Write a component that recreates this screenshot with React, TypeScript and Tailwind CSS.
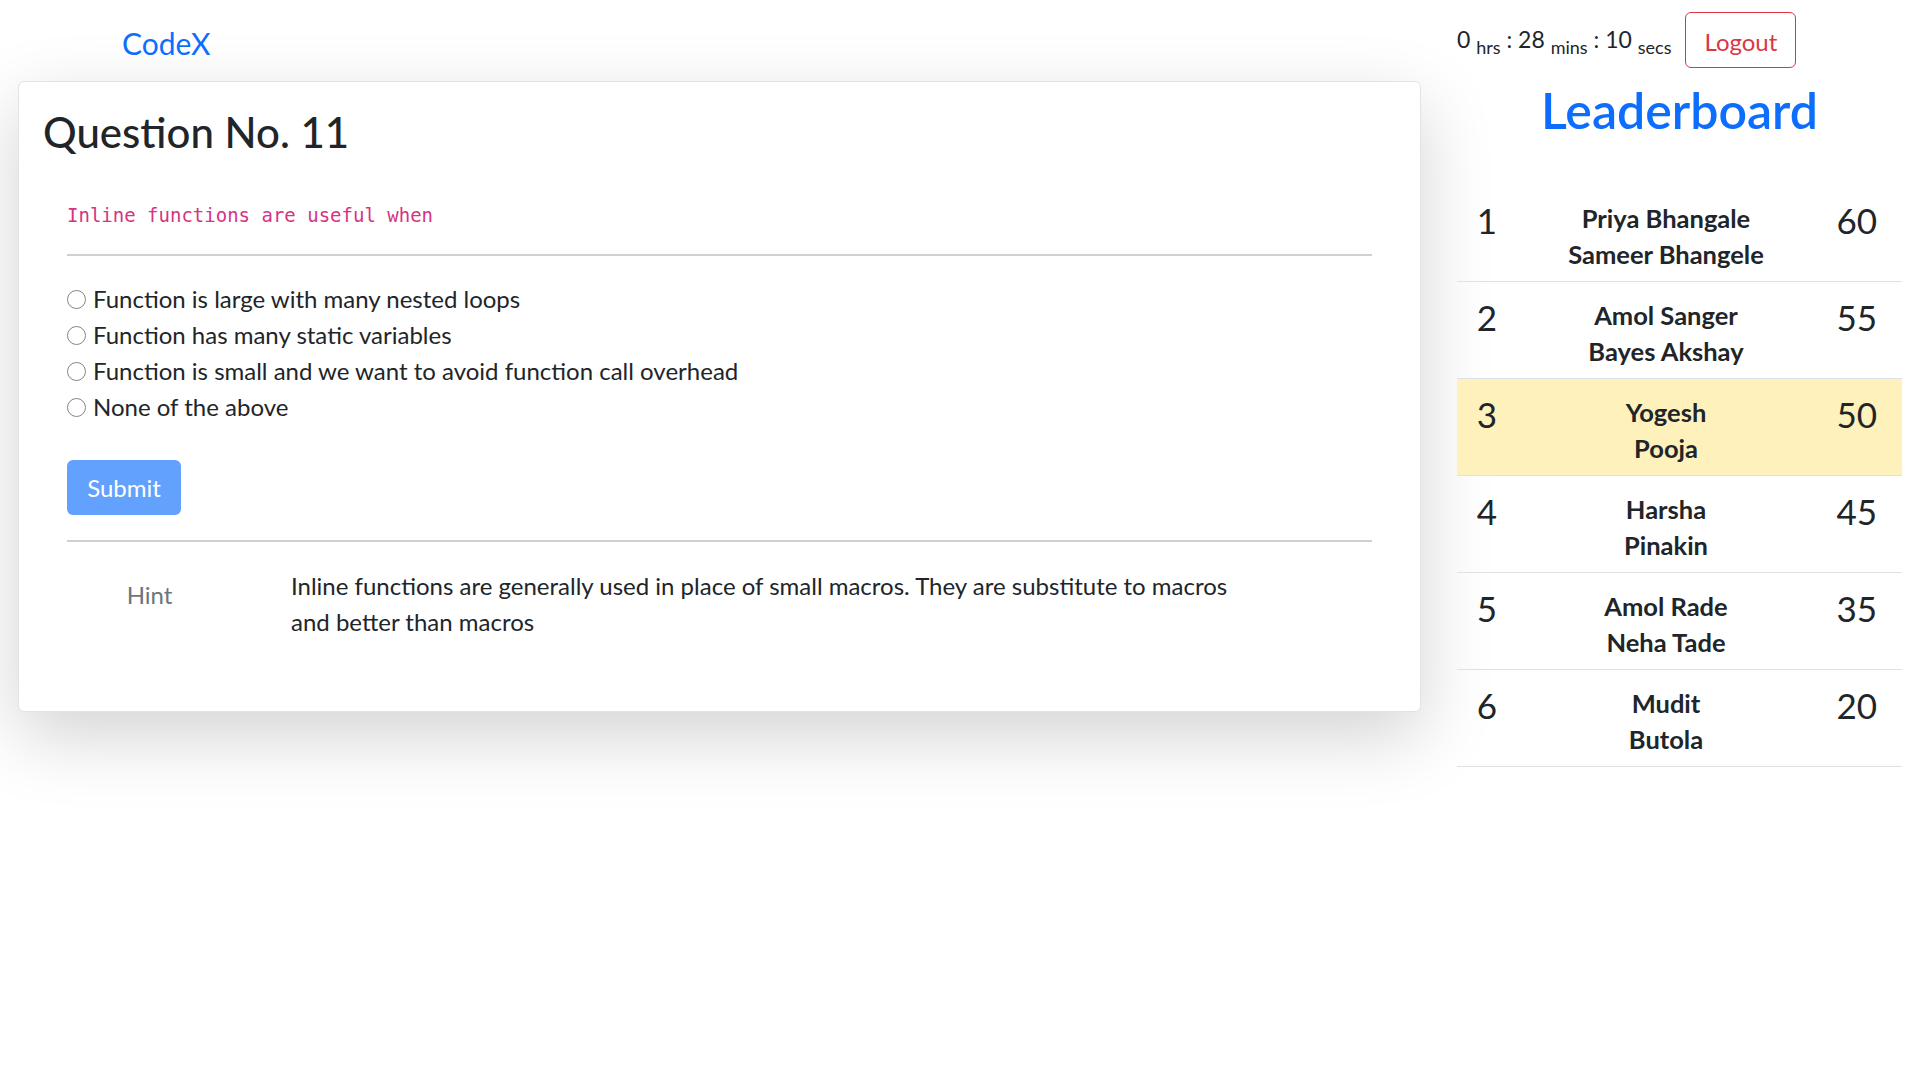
const options = [
  "Function is large with many nested loops",
  "Function has many static variables",
  "Function is small and we want to avoid function call overhead",
  "None of the above",
];

const leaders = [
  { rank: 1, names: ["Priya Bhangale", "Sameer Bhangele"], score: 60 },
  { rank: 2, names: ["Amol Sanger", "Bayes Akshay"], score: 55 },
  { rank: 3, names: ["Yogesh", "Pooja"], score: 50, me: true },
  { rank: 4, names: ["Harsha", "Pinakin"], score: 45 },
  { rank: 5, names: ["Amol Rade", "Neha Tade"], score: 35 },
  { rank: 6, names: ["Mudit", "Butola"], score: 20 },
];

function Timer() {
  return (
    <div className="mt-[5px] text-[23px] leading-[36px] text-[#212529] whitespace-nowrap">
      0 <span className="text-[18px] align-sub">hrs</span> : 28{" "}
      <span className="text-[18px] align-sub">mins</span> : 10{" "}
      <span className="text-[18px] align-sub">secs</span>
    </div>
  );
}

export default function App() {
  return (
    <div className="min-h-screen bg-white text-[#212529] font-['Lato',sans-serif] flex">
      {/* Question side */}
      <div className="w-[1439px] shrink-0 pl-[18px]">
        <nav className="h-[81px] flex items-center pl-[104px]">
          <a className="pt-[5px] text-[30px] leading-[45px] text-[#0d6efd]">CodeX</a>
        </nav>

        <div className="w-[1403px] rounded-[6px] border border-[#e3e3e3] bg-white shadow-[0_24px_72px_rgba(0,0,0,0.175)]">
          <div className="px-[24px] pt-[25px] pb-[71px]">
            <h2 className="text-[42px] font-medium leading-[1.2]">Question No. 11</h2>

            <div className="px-[24px]">
              <code className="block mt-[44px] text-[19px] leading-[28px] text-[#d63384] font-['DejaVu_Sans_Mono',monospace]">
                Inline functions are useful when
              </code>
              <div className="mt-[25px] h-[2px] bg-[#d0d0d0]" />

              <div className="mt-[25px] flex flex-col">
                {options.map((o) => (
                  <label key={o} className="flex items-center h-[36px] text-[24px] leading-[36px]">
                    <span className="w-[19px] h-[19px] rounded-full border-[1.5px] border-[#858585] bg-white shrink-0" />
                    <span className="ml-[7px]">{o}</span>
                  </label>
                ))}
              </div>

              <button className="mt-[35px] w-[114px] h-[55px] rounded-[6px] bg-[#62a1fd] text-white text-[24px] leading-[36px]">
                Submit
              </button>

              <div className="mt-[25px] h-[2px] bg-[#d0d0d0]" />

              <div className="mt-[26px] flex text-[24px] leading-[36px]">
                <div className="w-[165px] pt-[9px] text-center text-[#6c757d]">Hint</div>
                <p className="ml-[59px] w-[970px]">
                  Inline functions are generally used in place of small macros. They are substitute to macros and better
                  than macros
                </p>
              </div>
            </div>
          </div>
        </div>
      </div>

      {/* Leaderboard side */}
      <div className="ml-[18px] w-[445px] shrink-0">
        <div className="h-[80px] flex items-center">
          <Timer />
          <button className="ml-[14px] h-[56px] px-[18px] pt-[4px] rounded-[6px] border border-[#dc3545] text-[#dc3545] text-[24px] leading-[36px]">
            Logout
          </button>
        </div>

        <h1 className="text-center text-[50px] font-semibold leading-[1.2] text-[#0d6efd]">Leaderboard</h1>

        <div className="mt-[45px]">
          {leaders.map((l) => (
            <div
              key={l.rank}
              className={`grid grid-cols-[60px_1fr_87px] h-[97px] border-b border-[#dee2e6] ${
                l.me ? "bg-[#fff1bc]" : ""
              }`}
            >
              <div className="pt-[14px] text-center text-[35px] leading-[42px]">{l.rank}</div>
              <div className="pt-[15px] text-center font-bold text-[25.5px] leading-[36px]">
                {l.names.map((n) => (
                  <div key={n}>{n}</div>
                ))}
              </div>
              <div className="pt-[14px] pr-[25px] text-right text-[35px] leading-[42px]">{l.score}</div>
            </div>
          ))}
        </div>
      </div>
    </div>
  );
}
